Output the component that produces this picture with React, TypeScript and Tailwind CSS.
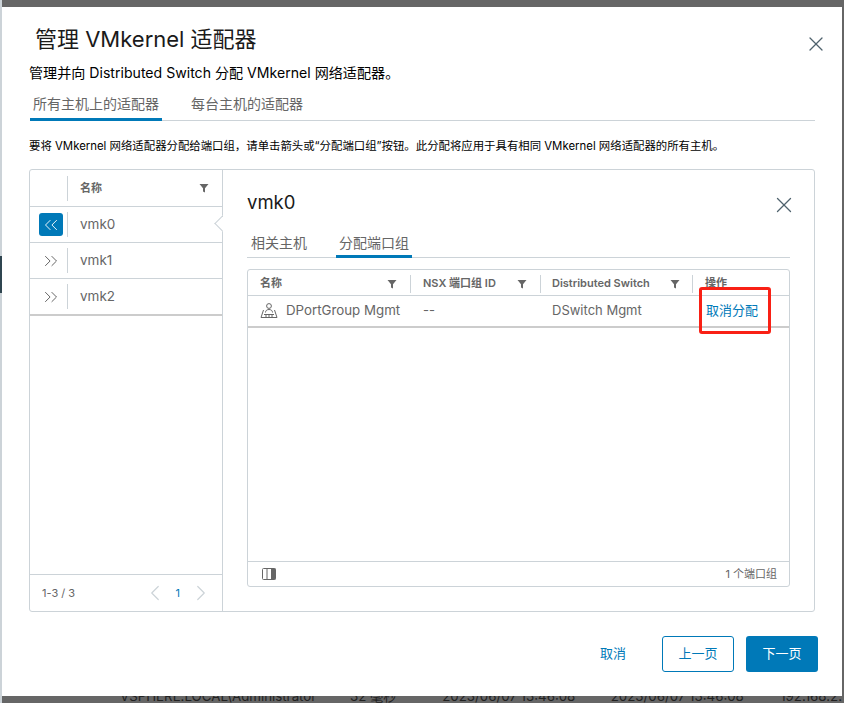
import { X, ChevronLeft, ChevronRight, ChevronsLeft, ChevronsRight } from 'lucide-react'

const FONT = { fontFamily: 'Inter, "Noto Sans CJK SC", sans-serif' }

function Funnel({ className = '' }: { className?: string }) {
  return (
    <svg viewBox="0 0 10 10" className={`h-[10px] w-[10px] fill-[#666] ${className}`}>
      <path d="M0.5 1h9L6 5.2V9.5L4 8.4V5.2z" />
    </svg>
  )
}

function PortGroupIcon() {
  return (
    <svg viewBox="0 0 18 18" className="h-[18px] w-[18px] fill-none stroke-[#666]" strokeWidth="1">
      <circle cx="9" cy="4" r="2.400" />
      <path d="M5.500 10.500c0-2 1.600-3 3.500-3s3.500 1 3.500 3" />
      <path d="M3.500 8 1 15.500h16L14.500 8" />
      <path d="M4 12.500h10M6 12.500v3M9 12.500v3M12 12.500v3" />
    </svg>
  )
}

function ColumnsIcon() {
  return (
    <svg viewBox="0 0 14 12" className="h-3 w-[14px]">
      <rect x="0.500" y="0.500" width="13" height="11" rx="1" fill="#fff" stroke="#666" />
      <path d="M5 1v10" stroke="#666" />
      <rect x="9" y="0.500" width="4.500" height="11" fill="#666" />
    </svg>
  )
}

function Sep({ h = 'h-[18px]' }: { h?: string }) {
  return <span className={`w-px shrink-0 bg-[#ccd3d8] ${h}`} />
}

function ListRow({ name, active, last }: { name: string; active?: boolean; last?: boolean }) {
  return (
    <div className={`relative flex items-center ${last ? 'h-[37px] border-b-2 border-[#ccc]' : 'h-[36px] border-b border-[#ccd3d8]'}`}>
      <div className="flex w-[37px] shrink-0 justify-center pl-[4px]">
        {active ? (
          <span className="grid h-[23px] w-[24px] place-items-center rounded-[3px] bg-[#0079b8]">
            <ChevronsLeft size={22} strokeWidth={1} className="text-white" />
          </span>
        ) : (
          <ChevronsRight size={22} strokeWidth={1} className="text-[#565656]" />
        )}
      </div>
      <Sep h="h-[25px]" />
      <span className="pl-[12px] text-[13.500px] text-[#666]">{name}</span>
      {active && (
        <span className="absolute right-[-1px] top-[8px] h-[18px] w-[10px] overflow-hidden">
          <span className="absolute left-[4px] top-[2px] block h-[13px] w-[13px] rotate-45 border-b border-l border-[#ccd3d8] bg-white" />
        </span>
      )}
    </div>
  )
}

export default function App() {
  return (
    <div style={FONT} className="relative flex h-[703px] w-[844px] overflow-hidden bg-[#666]">
      <div className="relative w-[2px] shrink-0 bg-[#ccd3d8]">
        <div className="absolute left-0 top-[256px] h-[37px] w-[2px] bg-[#2f4550]" />
      </div>

      <div className="flex w-[840px] flex-col">
        <div className="mt-[7px] flex h-[689px] shrink-0 flex-col bg-white">
          {/* header */}
          <div className="flex h-[48px] items-end justify-between pl-[33px] pr-[14px]">
            <h1 className="text-[22px] leading-[32px] text-[#1a1a1a]">管理 VMkernel 适配器</h1>
            <X size={24} strokeWidth={1.300} className="mb-[-1px] text-[#4f626d]" />
          </div>

          <p className="ml-[27px] mt-[8px] text-[14.100px] leading-[20px] text-black">
            管理并向 Distributed Switch 分配 VMkernel 网络适配器。
          </p>

          {/* tabs */}
          <div className="ml-[28px] mr-[27px] mt-[9px] flex h-[29px] border-b border-[#ccd3d8]">
            <span className="mb-[-1px] h-[29px] w-[132px] border-b-[3px] border-[#0079b8] pl-[3px] pt-[2px] text-[14px] leading-[20px] text-[#666]">
              所有主机上的适配器
            </span>
            <span className="ml-[29px] pt-[2px] text-[14px] leading-[20px] text-[#666]">每台主机的适配器</span>
          </div>

          <p className="ml-[27px] mt-[16px] text-[11.400px] leading-[18px] text-black">
            要将 VMkernel 网络适配器分配给端口组，请单击箭头或“分配端口组”按钮。此分配将应用于具有相同 VMkernel 网络适配器的所有主机。
          </p>

          {/* main panel */}
          <div className="ml-[27px] mt-[14px] flex h-[443px] w-[786px] rounded-[3px] border border-[#ccd3d8]">
            <div className="flex w-[193px] shrink-0 flex-col border-r border-[#ccd3d8]">
              <div className="flex h-[37px] items-center border-b border-[#ccd3d8]">
                <div className="w-[37px] shrink-0" />
                <Sep h="h-[25px]" />
                <span className="flex-1 pl-[12px] text-[11px] font-semibold text-[#666]">名称</span>
                <Funnel className="mr-[13px]" />
              </div>
              <ListRow name="vmk0" active />
              <ListRow name="vmk1" />
              <ListRow name="vmk2" last />
              <div className="flex-1" />
              <div className="flex h-[37px] items-center border-t border-[#ccd3d8] pl-[12px] text-[11px] text-[#666]">
                <span className="flex-1">1-3 / 3</span>
                <ChevronLeft size={26} strokeWidth={1.100} className="text-[#ccd3d8]" />
                <span className="mx-[8px] text-[#0079b8]">1</span>
                <ChevronRight size={26} strokeWidth={1.100} className="mr-[8px] text-[#ccd3d8]" />
              </div>
            </div>

            <div className="flex flex-1 flex-col pl-[24px] pr-[24px]">
              <div className="flex h-[66px] items-start justify-between pt-[19px]">
                <h2 className="text-[18.500px] leading-[26px] text-[#1a1a1a]">vmk0</h2>
                <X size={26} strokeWidth={1.200} className="mr-[-7px] mt-[3px] text-[#4f626d]" />
              </div>
              <div className="flex h-[22px] border-b border-[#ccd3d8]">
                <span className="pl-[4px] text-[14px] leading-[13px] text-[#666]">相关主机</span>
                <span className="mb-[-1px] ml-[29px] h-[22px] w-[76px] border-b-[3px] border-[#0079b8] pl-[3px] text-[14px] leading-[13px] text-[#666]">
                  分配端口组
                </span>
              </div>

              {/* table */}
              <div className="relative mt-[11px] flex h-[318px] flex-col rounded-[3px] border border-[#ccd3d8]">
                <div className="flex h-[26px] items-center border-b border-[#ccd3d8] pt-[2px] text-[11px] font-semibold text-[#666]">
                  <div className="flex w-[162px] items-center pl-[12px] pr-[13px]">
                    <span className="flex-1">名称</span>
                    <Funnel />
                  </div>
                  <Sep />
                  <div className="flex w-[129px] items-center pl-[12px] pr-[13px]">
                    <span className="flex-1">NSX 端口组 ID</span>
                    <Funnel />
                  </div>
                  <Sep />
                  <div className="flex w-[151px] items-center pl-[11px] pr-[12px]">
                    <span className="flex-1">Distributed Switch</span>
                    <Funnel />
                  </div>
                  <Sep />
                  <span className="pl-[12px]">操作</span>
                </div>
                <div className="flex h-[32px] items-center border-b-2 border-[#ccc] text-[13px] text-[#666]">
                  <div className="flex w-[162px] items-center gap-[8px] pl-[12px]">
                    <PortGroupIcon />
                    <span className="text-[13.300px]">DPortGroup Mgmt</span>
                  </div>
                  <span className="w-[130px] pl-[13px]">--</span>
                  <span className="w-[152px] pl-[12px]">DSwitch Mgmt</span>
                  <span className="pl-[14px] text-[#0079b8]">取消分配</span>
                </div>
                <div className="flex-1" />
                <div className="flex h-[25px] items-center justify-between border-t border-[#ccd3d8] pl-[14px] pr-[12px] text-[11px] text-[#666]">
                  <ColumnsIcon />
                  <span>1 个端口组</span>
                </div>
                {/* red annotation box */}
                <div className="absolute left-[451px] top-[17px] h-[47px] w-[72px] rounded-[3px] border-[3px] border-[#f92015]" />
              </div>
            </div>
          </div>

          {/* footer */}
          <div className="mr-[24px] mt-[24px] flex items-center justify-end text-[13px]">
            <span className="mr-[36px] text-[#0079b8]">取消</span>
            <span className="flex h-[36px] w-[72px] items-center justify-center rounded-[3px] border border-[#0079b8] text-[#0079b8]">
              上一页
            </span>
            <span className="ml-[12px] flex h-[36px] w-[72px] items-center justify-center rounded-[3px] bg-[#0079b8] text-white">
              下一页
            </span>
          </div>
        </div>

        {/* table behind the dialog, clipped by it */}
        <div className="flex h-[7px] overflow-hidden pl-[118px] text-[13.300px] leading-[13px] text-[#222]">
          <span className="mt-[-6px] w-[232px]">VSPHERE.LOCAL\Administrator</span>
          <span className="mt-[-6px] w-[93px]">32 毫秒</span>
          <span className="mt-[-6px] w-[170px]">2023/06/07 13:46:08</span>
          <span className="mt-[-6px] w-[171px]">2023/06/07 13:46:08</span>
          <span className="mt-[-6px]">192.168.2.</span>
        </div>
      </div>
    </div>
  )
}
